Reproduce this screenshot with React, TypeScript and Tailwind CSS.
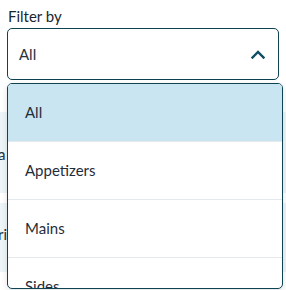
import React from "react";

const options = ["All", "Appetizers", "Mains", "Sides"];

const ChevronUp = () => (
  <svg width="14" height="9" viewBox="0 0 14 9" fill="none">
    <path d="M1.5 7.5L7 2l5.5 5.5" stroke="#0d4f63" strokeWidth="2.4" strokeLinecap="square" />
  </svg>
);

const App = () => {
  return (
    <div className="relative w-[286px] h-[290px] overflow-hidden bg-white font-['Lato','Noto_Sans',sans-serif] text-[#1d2a35]">
      <div className="px-[8px] pt-[7px]">
        <div className="text-[15px] leading-[18px] text-[#1a2630]">Filter by</div>
      </div>
      <div className="mx-[7px] mt-[3px] h-[52px] flex items-center justify-between rounded-[5px] border border-[#0d4352] pl-[11px] pr-[13px]">
        <span className="text-[15px] text-[#26323d]">All</span>
        <ChevronUp />
      </div>

      {/* content behind the open menu */}
      <div className="mt-[32px] flex flex-col gap-[10px]">
        <div className="h-[81px] bg-[#eef5f9] flex items-center">
          <span className="text-[15px] -ml-[2px] mt-[4px] text-[#26323d]">a</span>
        </div>
        <div className="h-[69px] bg-[#eef5f9] flex items-center">
          <span className="text-[15px] -ml-[2px] -mt-[6px] text-[#26323d]">ri</span>
        </div>
      </div>

      <div className="absolute left-[7px] top-[83px] w-[276px] h-[206px] overflow-hidden rounded-[5px] border border-[#0d4352] bg-white shadow-[0_2px_6px_rgba(0,0,0,0.12)]">
        {options.map((o, i) => (
          <div
            key={o}
            className={
              i === 0
                ? "h-[57px] flex items-center pl-[17px] bg-[#c8e5f1] text-[15px] text-[#1f2d3a]"
                : "h-[58px] flex items-center pl-[17px] border-t border-[#e6e9eb] text-[15px] text-[#1f2d3a]"
            }
          >
            {o}
          </div>
        ))}
      </div>
    </div>
  );
};

export default App;
